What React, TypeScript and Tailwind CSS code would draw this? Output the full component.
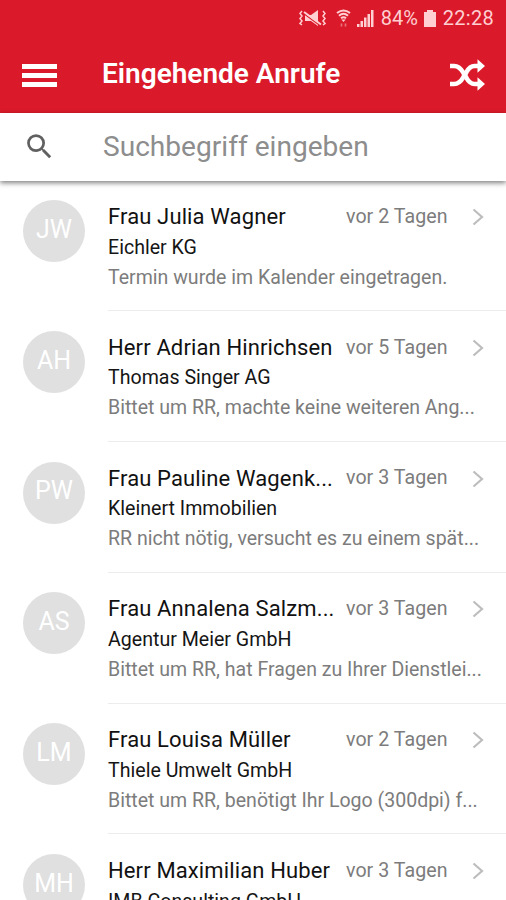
import { MdSearch } from "react-icons/md";

type Call = {
  initials: string;
  name: string;
  company: string;
  message?: string;
  time: string;
};

const calls: Call[] = [
  {
    initials: "JW",
    name: "Frau Julia Wagner",
    company: "Eichler KG",
    message: "Termin wurde im Kalender eingetragen.",
    time: "vor 2 Tagen",
  },
  {
    initials: "AH",
    name: "Herr Adrian Hinrichsen",
    company: "Thomas Singer AG",
    message: "Bittet um RR, machte keine weiteren Ang...",
    time: "vor 5 Tagen",
  },
  {
    initials: "PW",
    name: "Frau Pauline Wagenk...",
    company: "Kleinert Immobilien",
    message: "RR nicht nötig, versucht es zu einem spät...",
    time: "vor 3 Tagen",
  },
  {
    initials: "AS",
    name: "Frau Annalena Salzm...",
    company: "Agentur Meier GmbH",
    message: "Bittet um RR, hat Fragen zu Ihrer Dienstlei...",
    time: "vor 3 Tagen",
  },
  {
    initials: "LM",
    name: "Frau Louisa Müller",
    company: "Thiele Umwelt GmbH",
    message: "Bittet um RR, benötigt Ihr Logo (300dpi) f...",
    time: "vor 2 Tagen",
  },
  {
    initials: "MH",
    name: "Herr Maximilian Huber",
    company: "IMB Consulting GmbH",
    time: "vor 3 Tagen",
  },
];

function StatusBar() {
  return (
    <div className="flex h-9 items-center justify-end pr-3 text-[#ffcfd2]">
      {/* Muted + vibrate */}
      <svg className="mr-2.5 h-[18px] w-[27px]" viewBox="0 0 27 18" fill="none" stroke="currentColor">
        <path d="M3 2 1 4.5 3 7 1 9.5 3 12 1 14.5 3 16M24 2l2 2.5L24 7l2 2.5L24 12l2 2.5-2 1.5" strokeWidth="1.5" />
        <path d="M6 6h6l7-5v16l-7-5H6z" fill="currentColor" stroke="none" />
        <path d="M6 5.5 21 16.5" stroke="#da1a2a" strokeWidth="1.3" />
        <path d="M5 3 22 15.5" strokeWidth="2" />
      </svg>
      {/* Wifi */}
      <svg className="mr-1.5 h-[18px] w-[15px]" viewBox="0 0 15 18" fill="none" stroke="currentColor">
        <path d="M1 4Q7.5-1 14 4M3 6.7q4.5-4 9 0M5 9.3q2.5-2 5 0" strokeWidth="2" />
        <path d="M5.3 10.5h4.4l-2.2 2.5z" fill="currentColor" stroke="none" />
        <path d="M5.5 14.5v3M9.5 14.5v3" strokeWidth="1.6" opacity="0.5" />
      </svg>
      {/* Signal strength */}
      <svg className="mr-[7px] h-[18px] w-[17px]" viewBox="0 0 17 18" fill="currentColor">
        <path d="M0 15h2.5v3H0zM3.5 12H6v6H3.5zM7 8.5h2.5V18H7zM10.5 5H13v13h-2.5zM14 1h2.5v17H14z" />
      </svg>
      <span className="w-[39px] text-[20px] leading-9 whitespace-nowrap">84%</span>
      {/* Battery */}
      <svg className="mr-[7px] ml-[4px] h-[17px] w-[12px]" viewBox="0 0 12 17" fill="currentColor">
        <path d="M3 0h6v2h3v15H0V2h3z" />
      </svg>
      <span className="text-[20px] leading-9 tracking-[0.3px]">22:28</span>
    </div>
  );
}

function ShuffleIcon() {
  return (
    <svg className="mt-px h-[32px] w-[35px]" viewBox="0 0 35 32" fill="none" stroke="currentColor" strokeWidth="4.6">
      <path d="M0 7h4c4.5 0 7 2.5 9.5 7l3 5c2.5 4.5 4.5 6 8 6h4" />
      <path d="M0 25h4c4.5 0 7-2.5 9.5-7l3-5c2.5-4.5 4.5-6 8-6h4" />
      <path d="M27.5.3v13.4L35 7zM27.5 18.3v13.4L35 25z" fill="currentColor" stroke="none" />
    </svg>
  );
}

function Header() {
  return (
    <header className="h-[112.5px] shrink-0 bg-[#da1a2a] text-white">
      <StatusBar />
      <div className="flex h-[76px] items-center pr-[21px] pl-[22px]">
        <div className="mt-0.5 flex w-[35px] flex-col gap-1">
          <span className="h-[5px] bg-white" />
          <span className="h-[5px] bg-white" />
          <span className="h-[5px] bg-white" />
        </div>
        <h1 className="ml-[45px] flex-1 text-[28px] leading-8 font-semibold whitespace-nowrap">
          Eingehende Anrufe
        </h1>
        <ShuffleIcon />
      </div>
    </header>
  );
}

function SearchBar() {
  return (
    <div className="relative z-10 flex h-[68px] shrink-0 items-center bg-white pl-[23px] shadow-[0_2px_5px_rgba(0,0,0,0.5)]">
      <MdSearch className="size-[33px] text-[#606060]" />
      <span className="ml-[47px] text-[28.1px] leading-9 whitespace-nowrap text-[#8d8d8d]">
        Suchbegriff eingeben
      </span>
    </div>
  );
}

function CallRow({ call }: { call: Call }) {
  return (
    <li className="flex h-[130.8px] shrink-0 pl-[23px]">
      <div className="mt-[19.5px] flex size-[62px] shrink-0 items-center justify-center rounded-full bg-[#e0e0e0] pb-[3px] text-[25px] text-white">
        {call.initials}
      </div>
      <div className="ml-[23px] flex-1 border-b border-[#ececec] pt-[20.5px] whitespace-nowrap">
        <div className="mb-[0.6px] flex h-[31px] items-center">
          <span className="w-[238px] text-[22px] tracking-[0.13px] text-[#111]">{call.name}</span>
          <span className="w-[126px] text-[19.6px] tracking-[0.05px] text-[#7c7c7c]">{call.time}</span>
          <svg className="mt-px h-[18px] w-[12px]" viewBox="0 0 12 18" fill="none">
            <path d="M1.5 1.5 10 9l-8.5 7.5" stroke="#bdbdbd" strokeWidth="2.2" />
          </svg>
        </div>
        <div className="h-[30px] text-[19.6px] leading-[30px] text-[#151515]">{call.company}</div>
        {call.message && (
          <div className="h-[30px] text-[19.55px] leading-[30px] text-[#7c7c7c]">{call.message}</div>
        )}
      </div>
    </li>
  );
}

export default function App() {
  return (
    <div className="flex h-[900px] w-[506px] flex-col overflow-hidden bg-white font-['Roboto',sans-serif]">
      <Header />
      <SearchBar />
      <ul className="flex flex-col">
        {calls.map((call) => (
          <CallRow key={call.initials} call={call} />
        ))}
      </ul>
    </div>
  );
}
